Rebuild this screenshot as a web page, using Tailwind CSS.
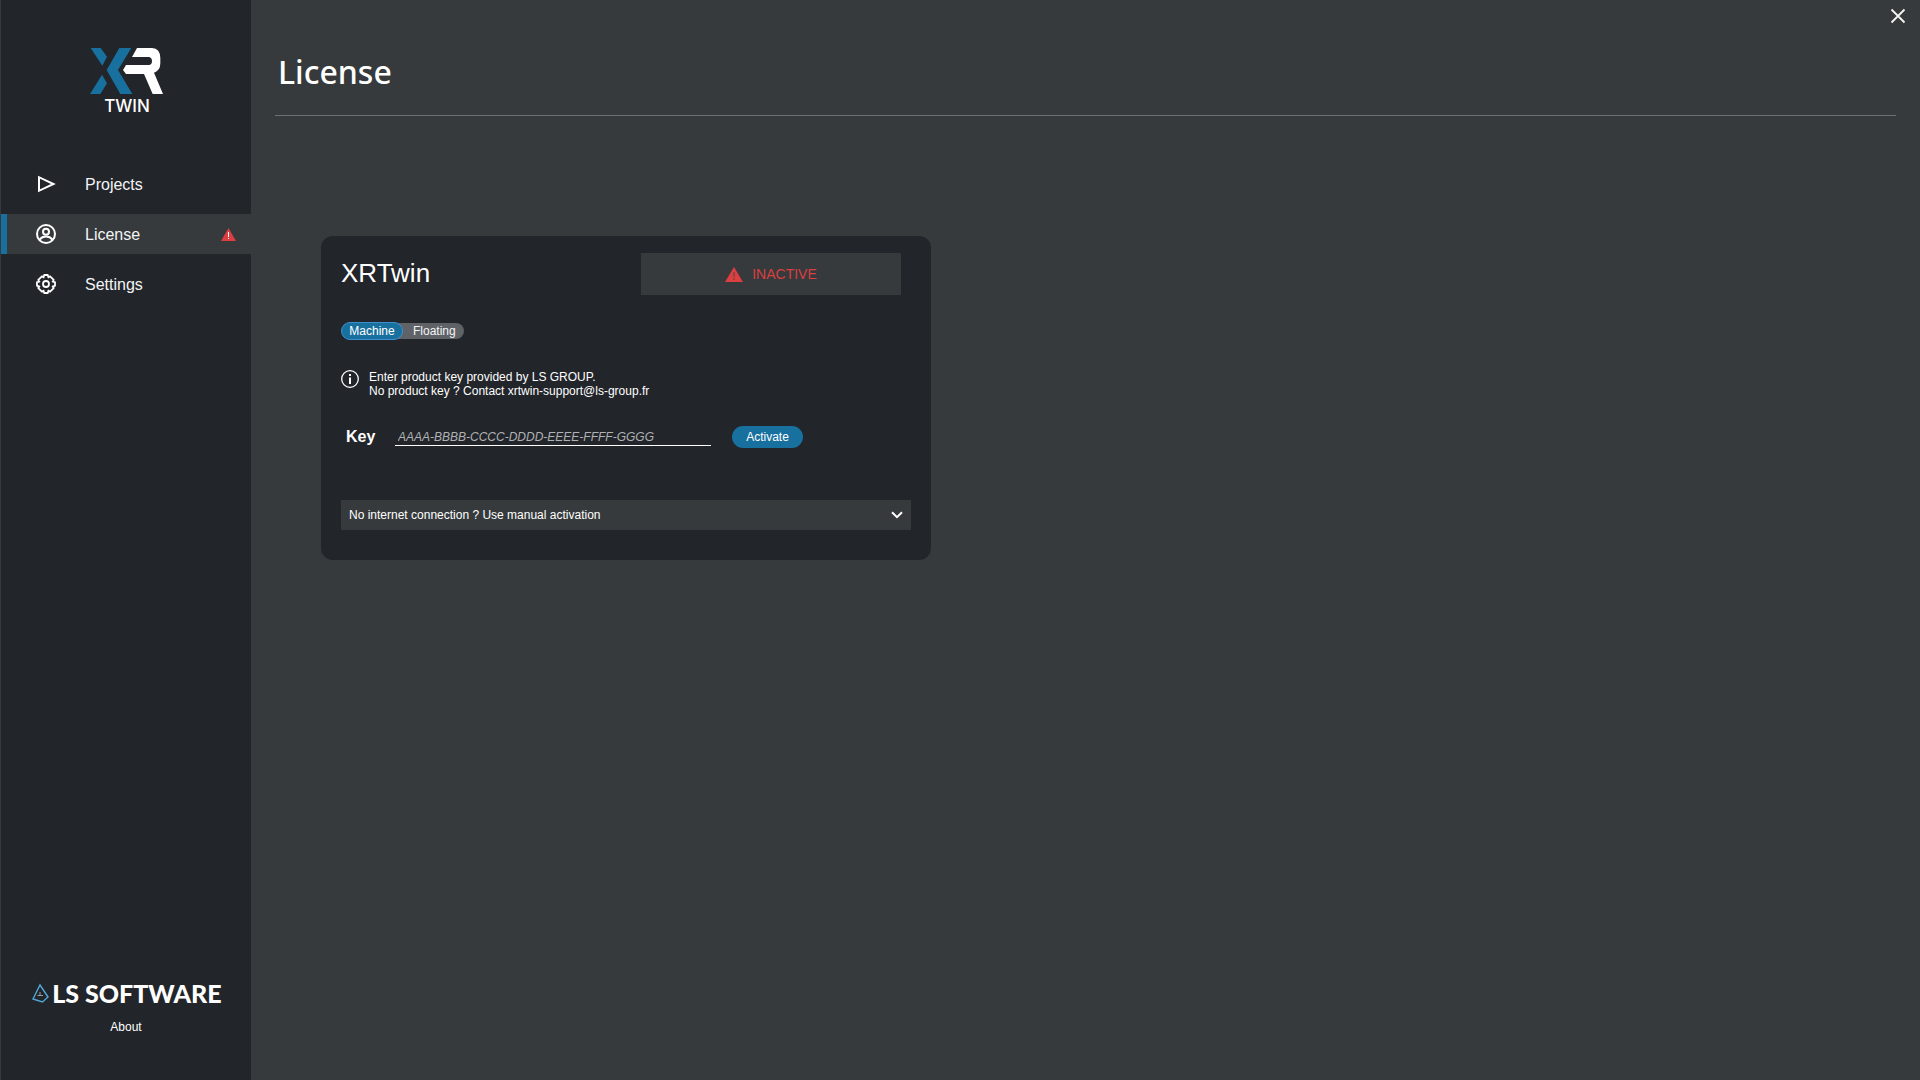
<!DOCTYPE html>
<html lang="en">
<head>
<meta charset="utf-8">
<meta name="viewport" content="width=device-width, initial-scale=1">
<title>XRTwin - License</title>
<script src="https://cdn.jsdelivr.net/npm/@tailwindcss/browser@4"></script>
</head>
<body class="flex min-h-screen bg-[#363a3c] pl-px font-['Liberation_Sans',Arial,sans-serif] text-xs text-white">

  <aside class="flex w-[250px] shrink-0 flex-col bg-[#22252a]">
    <div class="flex flex-col items-center pt-[47px] pl-0.5">
      <svg class="h-[49px] w-[74px]" viewBox="60 51 222 147" role="img" aria-label="XR">
        <g fill="#18709f">
          <path d="M62 54H92L111 80L97 107Z"/>
          <path d="M60 192L96 134L111 160L91 192Z"/>
          <path d="M148 54H184L144 120L187 192H151L110 120Z"/>
        </g>
        <path fill="#fff" d="M201 54H246Q271 56 271 84V100Q271 122 252 128L279 192H248L222 132H168L159 120L168 105H238Q246 103 246 94Q246 84 238 81H186Z"/>
      </svg>
      <span class="font-['Inter',sans-serif] text-[17px]/5 font-medium">TWIN</span>
    </div>

    <nav class="mt-12 flex flex-col gap-2.5 text-base text-gray-100">
      <a href="#projects" class="flex h-10 items-center border-l-6 border-transparent pl-[29px]">
        <svg class="size-5" viewBox="0 0 20 20" fill="none" stroke="#fff" stroke-width="2" aria-hidden="true"><path d="M3 3.2V16.8L17.5 10Z"/></svg>
        <span class="ml-[29px] pt-0.5">Projects</span>
      </a>
      <a href="#license" aria-current="page" class="flex h-10 items-center border-l-6 border-[#18709f] bg-[#363a3c] pr-[15px] pl-[29px]">
        <svg class="size-5" viewBox="0 0 20 20" fill="none" stroke="#fff" stroke-width="2" aria-hidden="true"><circle cx="10" cy="10" r="9"/><circle cx="10" cy="7.8" r="3"/><path d="M3.6 15.6Q6 12.6 10 12.6T16.4 15.6"/></svg>
        <span class="ml-[29px] pt-0.5">License</span>
        <svg class="ml-auto h-[13px] w-[15px]" viewBox="0 0 15 13" aria-hidden="true"><path fill="#dc3f41" d="M7.5 0L15 13H0Z"/><path fill="#fff" d="M7 4h1v5H7zM7 10h1v1H7z"/></svg>
      </a>
      <a href="#settings" class="flex h-10 items-center border-l-6 border-transparent pl-[29px]">
        <svg class="size-5" viewBox="0 0 20 20" fill="none" stroke="#fff" stroke-width="1.8" stroke-linejoin="round" aria-hidden="true">
          <path d="M8.200 1H11.800L12.400 3.400L14.100 2.300L17.700 5.900L16.600 7.600L19 8.200V11.800L16.600 12.400L17.700 14.100L14.100 17.700L12.400 16.600L11.800 19H8.200L7.600 16.600L5.900 17.700L2.300 14.100L3.400 12.400L1 11.800V8.200L3.400 7.600L2.300 5.900L5.900 2.300L7.600 3.400Z"/>
          <circle cx="10" cy="10" r="3"/>
        </svg>
        <span class="ml-[29px] pt-0.5">Settings</span>
      </a>
    </nav>

    <footer class="mt-auto flex flex-col items-center pb-[45px]">
      <div class="flex items-center gap-[3px] pl-0.5">
        <svg class="h-5 w-[17px]" viewBox="0 0 17 20" fill="none" aria-hidden="true"><path stroke="#4fa8d6" stroke-width="1.4" d="M8 2L16 14L10.5 19L1 16Z"/><path stroke="#9a9da0" d="M8 9V12.500M5.500 12.500H11"/></svg>
        <span class="font-['Lato',sans-serif] text-[25px]/8 font-black">LS SOFTWARE</span>
      </div>
      <a href="#about" class="mt-2.5">About</a>
    </footer>
  </aside>

  <main class="flex min-w-0 grow flex-col px-6">
    <div class="-mr-3 flex h-8 items-center justify-end">
      <button type="button" aria-label="Close" class="p-0.5">
        <svg class="size-4" viewBox="0 0 16 16" stroke="#f4f4f0" stroke-width="1.8" aria-hidden="true"><path d="M1.500 1.500L14.500 14.500M14.500 1.500L1.500 14.500"/></svg>
      </button>
    </div>
    <header class="border-b border-[#6d7173] pb-[19px] pl-[3px]">
      <h1 class="pt-4 font-['Noto_Sans',sans-serif] text-[32px]/12 font-medium">License</h1>
    </header>

    <section class="mt-30 ml-[46px] flex w-full max-w-[610px] flex-col rounded-xl bg-[#22252a] px-5 pt-[17px] pb-[30px]">
      <div class="flex justify-between pr-2.5">
        <h2 class="text-[26px]/10">XRTwin</h2>
        <div role="status" class="flex h-[42px] w-[260px] items-center justify-center gap-[9px] bg-[#363a3c] text-sm text-[#dc3f41]">
          <svg class="h-[15px] w-[18px]" viewBox="0 0 18 15" aria-hidden="true"><path fill="#dc3f41" d="M9 0L18 15H0Z"/><path fill="#96403f" d="M8 5h2v5H8zM8 11h2v2H8z"/></svg>
          INACTIVE
        </div>
      </div>

      <div role="radiogroup" aria-label="License type" class="mt-[27px] flex h-[18px] items-center self-start">
        <label class="relative z-10 flex h-[18px] w-[62px] items-center justify-center rounded-full border border-[#3d8fd0] bg-[#18709f]">
          <input type="radio" name="license-type" class="absolute inset-0 appearance-none" checked>Machine
        </label>
        <label class="relative -ml-3 flex h-4 items-center rounded-r-full bg-[#5f6266] pr-2 pl-[22px] text-gray-100">
          <input type="radio" name="license-type" class="absolute inset-0 appearance-none">Floating
        </label>
      </div>

      <div class="mt-[30px] flex gap-2.5">
        <svg class="size-[18px]" viewBox="0 0 18 18" fill="none" stroke="#fff" aria-hidden="true"><circle cx="9" cy="9" r="8.300" stroke-width="1.3"/><path stroke-width="2" d="M9 7.500V14M9 4V6"/></svg>
        <p class="text-xs/[14px]">Enter product key provided by LS GROUP.<br>No product key ? Contact xrtwin-support@ls-group.fr</p>
      </div>

      <form class="mt-[27px] flex items-center pl-[5px]">
        <label for="key" class="w-[49px] text-base font-bold">Key</label>
        <input id="key" type="text" placeholder="AAAA-BBBB-CCCC-DDDD-EEEE-FFFF-GGGG" class="h-[18px] w-[316px] border-b border-white bg-transparent px-[3px] italic outline-none placeholder:text-[#b0b2b4]">
        <button type="button" class="ml-[21px] h-[22px] w-[71px] rounded-full bg-[#18709f]">Activate</button>
      </form>

      <details class="mt-[51px] bg-[#363a3c]">
        <summary class="flex h-[30px] cursor-pointer list-none items-center justify-between px-2">
          No internet connection ? Use manual activation
          <svg class="h-2 w-3" viewBox="0 0 12 8" fill="none" stroke="#fff" stroke-width="2" aria-hidden="true"><path d="M1 1.200L6 6.200L11 1.200"/></svg>
        </summary>
        <p class="px-2 pb-2">Contact xrtwin-support@ls-group.fr</p>
      </details>
    </section>
  </main>
</body>
</html>
